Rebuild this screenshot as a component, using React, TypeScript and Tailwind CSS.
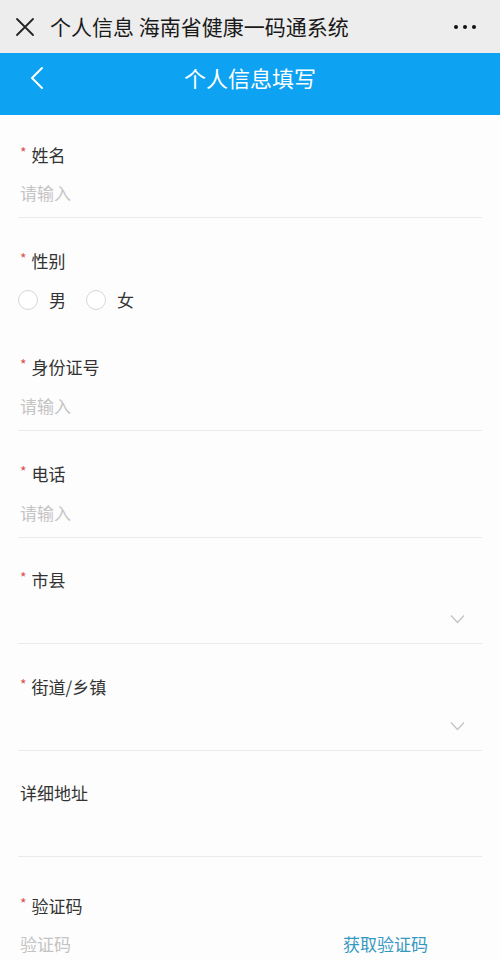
import { useState } from 'react'

type Field = {
  label: string
  required?: boolean
  kind: 'input' | 'radio' | 'select' | 'text' | 'code'
  divider?: boolean
}

const fields: Field[] = [
  { label: '性别', required: true, kind: 'radio', divider: false },
  { label: '身份证号', required: true, kind: 'input' },
  { label: '电话', required: true, kind: 'input' },
  { label: '市县', required: true, kind: 'select' },
  { label: '街道/乡镇', required: true, kind: 'select' },
  { label: '详细地址', kind: 'text' },
]

function Label({ text, required }: { text: string; required?: boolean }) {
  return (
    <div className="flex h-6 items-center text-[17px] leading-6 text-[#333]">
      {required ? <span className="mr-[5px] -mt-[6px] text-[14px] text-[#d9534f]">*</span> : null}
      <span>{text}</span>
    </div>
  )
}

function Chevron() {
  return (
    <svg width="15" height="10" viewBox="0 0 15 10" fill="none" stroke="#c2c2c2" strokeWidth="1.2">
      <path d="M1 1.5 L7.5 8.5 L14 1.5" />
    </svg>
  )
}

function Radio({ text, checked, onClick }: { text: string; checked: boolean; onClick: () => void }) {
  return (
    <button type="button" onClick={onClick} className="flex items-center">
      <span
        className={
          checked
            ? 'h-5 w-5 rounded-full border-[6px] border-[#0ea2f2]'
            : 'h-5 w-5 rounded-full border border-[#d6d6d6] bg-white'
        }
      />
      <span className="ml-[11px] text-[17px] text-[#333]">{text}</span>
    </button>
  )
}

function FieldBody({ f, sex, setSex }: { f: Field; sex: string; setSex: (v: string) => void }) {
  if (f.kind === 'radio') {
    return (
      <div className="-ml-[2px] flex h-6 items-center gap-5">
        <Radio text="男" checked={sex === 'm'} onClick={() => setSex('m')} />
        <Radio text="女" checked={sex === 'f'} onClick={() => setSex('f')} />
      </div>
    )
  }
  if (f.kind === 'select') {
    return (
      <div className="flex h-6 items-center justify-end pr-[15px]">
        <Chevron />
      </div>
    )
  }
  if (f.kind === 'text') {
    return <div className="h-6" />
  }
  return (
    <input
      placeholder="请输入"
      className="block h-6 w-full bg-transparent text-[17px] text-[#333] outline-none placeholder:text-[#c4c4c4]"
    />
  )
}

export default function App() {
  const [sex, setSex] = useState('')

  return (
    <div className="min-h-[960px] w-[500px] bg-[#fdfdfd] font-['Noto_Sans_CJK_SC','Noto_Sans',sans-serif]">
      <div className="flex h-[53px] items-center bg-[#ededed] pl-[15px] pr-[24px]">
        <svg width="20" height="20" viewBox="0 0 20 20" stroke="#222" strokeWidth="1.8" strokeLinecap="round">
          <path d="M2 2 L18 18 M18 2 L2 18" />
        </svg>
        <span className="ml-[15px] text-[21px] leading-none text-[#1a1a1a]">个人信息 海南省健康一码通系统</span>
        <div className="ml-auto flex gap-[5px]">
          <span className="h-[4px] w-[4px] rounded-full bg-[#111]" />
          <span className="h-[4px] w-[4px] rounded-full bg-[#111]" />
          <span className="h-[4px] w-[4px] rounded-full bg-[#111]" />
        </div>
      </div>

      <div className="relative flex h-[62px] justify-center bg-[#0ea2f2] pt-[11px]">
        <svg className="absolute left-[30px] top-[13px]" width="14" height="24" viewBox="0 0 14 24" fill="none" stroke="#fff" strokeWidth="2" strokeLinecap="round" strokeLinejoin="round">
          <path d="M12 2 L2 12 L12 22" />
        </svg>
        <span className="h-[26px] text-[22px] leading-[26px] text-white">个人信息填写</span>
      </div>

      <div className="px-[18px]">
        <div className="border-b border-[#e8eaee] pb-[12px] pt-[28px]">
          <div className="px-[2px]">
            <Label text="姓名" required />
            <div className="mt-[14px]">
              <FieldBody f={{ label: '姓名', kind: 'input' }} sex={sex} setSex={setSex} />
            </div>
          </div>
        </div>

        {fields.map((f) => (
          <div
            key={f.label}
            className={
              f.divider === false
                ? 'border-b border-transparent pb-[12px] pt-[30.5px]'
                : 'border-b border-[#e8eaee] pb-[12px] pt-[30.5px]'
            }
          >
            <div className="px-[2px]">
              <Label text={f.label} required={f.required} />
              <div className="mt-[15px]">
                <FieldBody f={f} sex={sex} setSex={setSex} />
              </div>
            </div>
          </div>
        ))}

        <div className="pt-[37px]">
          <div className="px-[2px]">
            <Label text="验证码" required />
            <div className="mt-[14px] flex h-6 items-center">
              <input
                placeholder="验证码"
                className="block h-6 min-w-0 flex-1 bg-transparent text-[17px] text-[#333] outline-none placeholder:text-[#c4c4c4]"
              />
              <button type="button" className="mr-[52px] text-[17px] text-[#3598c1]">
                获取验证码
              </button>
            </div>
          </div>
        </div>
      </div>
    </div>
  )
}
